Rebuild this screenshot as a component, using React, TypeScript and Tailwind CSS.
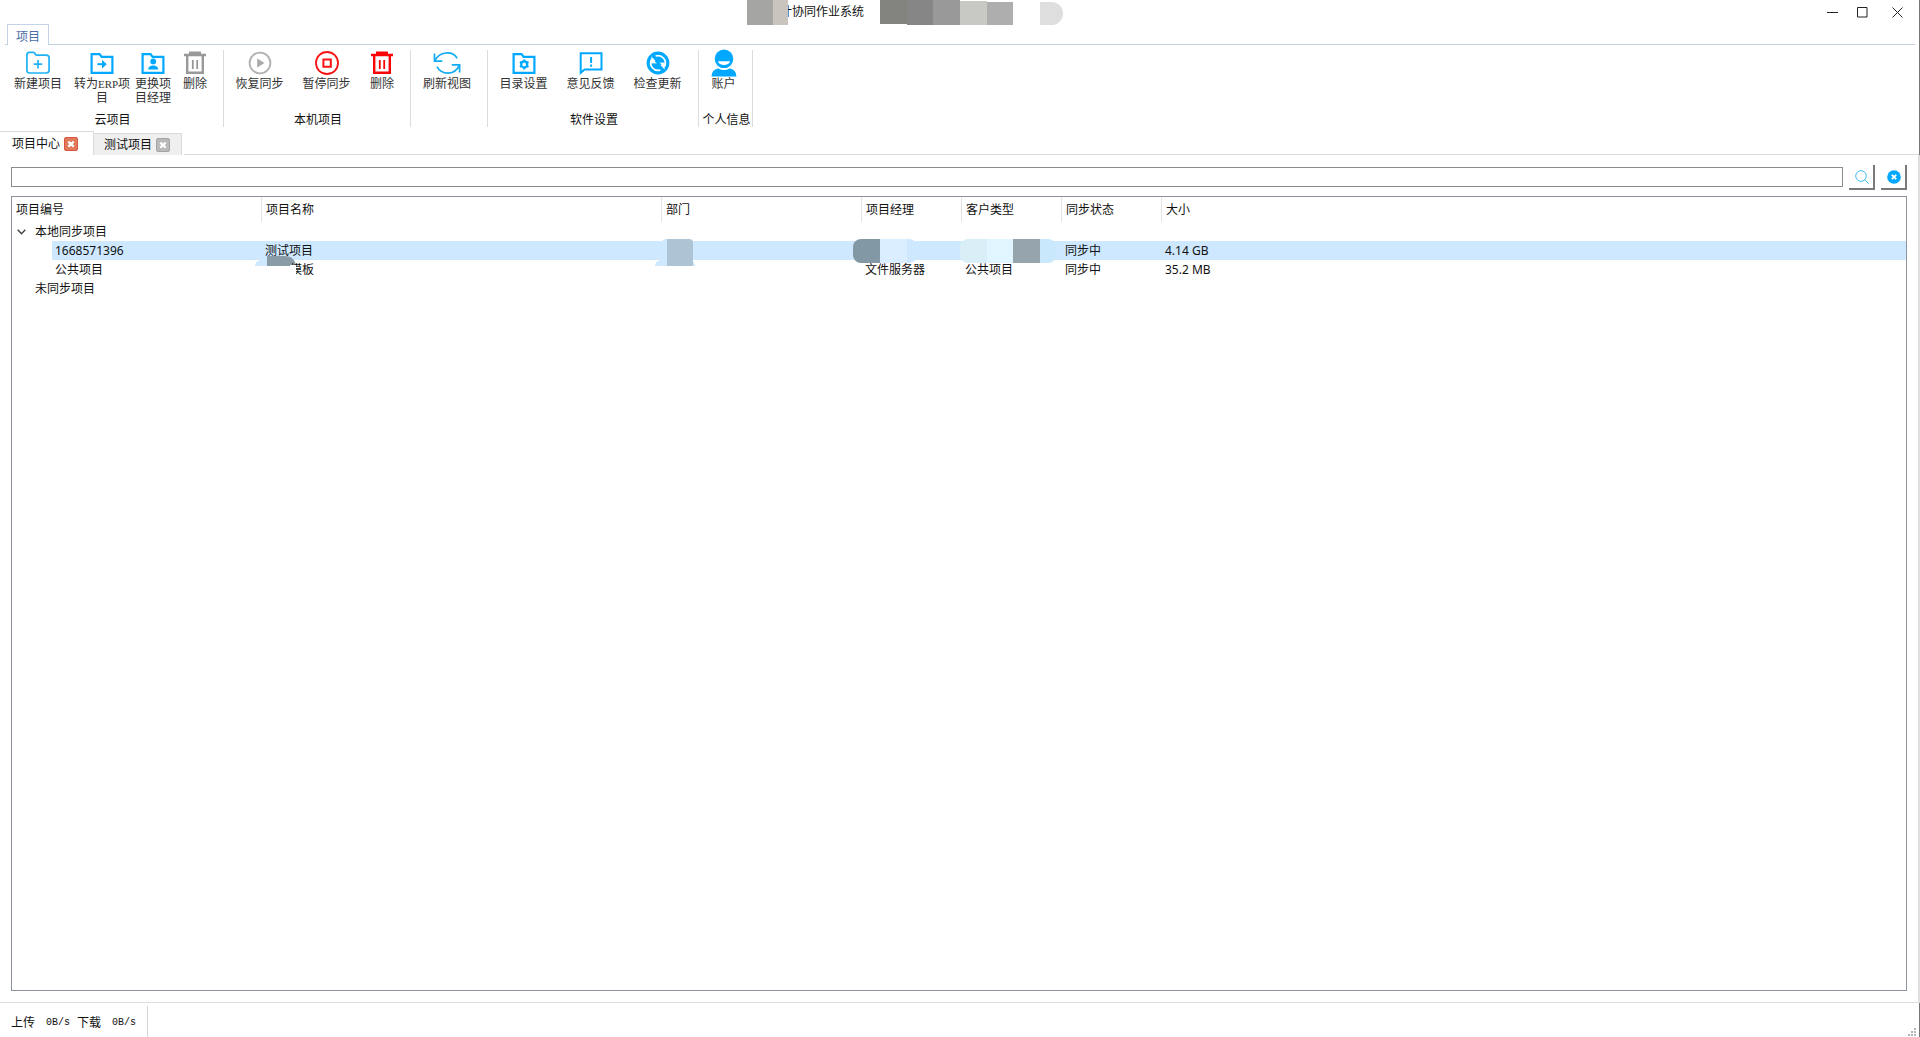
import React, { useState } from "react";

const BLUE = "#00a8ff";

function Svg({ children, size = "size-6" }: { children: React.ReactNode; size?: string }) {
  return (
    <svg viewBox="0 0 24 24" className={`${size} shrink-0`} fill="none" aria-hidden="true">
      {children}
    </svg>
  );
}

const FolderFrame = () => (
  <path d="M1.6 3.2h8l2 2.6h10.8v16H1.6z" stroke={BLUE} strokeWidth="2.2" />
);

const NewFolderIcon = () => (
  <Svg>
    <path
      d="M.9 4.2Q.9 1.4 3.4 1.4h4.2c1.6 0 1.4 2.8 3.2 2.8h9.4q2.9 0 2.9 2.8v12q0 3-2.9 3H3.8q-2.9 0-2.9-3z"
      stroke="#1eb2f5"
      strokeWidth="1.7"
    />
    <path d="M12 9v8.4M7.8 13.2h8.4" stroke="#1eb2f5" strokeWidth="1.7" />
  </Svg>
);

const FolderArrowIcon = () => (
  <Svg>
    <FolderFrame />
    <path d="M7.4 13.2h8" stroke={BLUE} strokeWidth="2" />
    <path d="M12 8.8l4.8 4.4-4.8 4.4z" fill={BLUE} />
  </Svg>
);

const FolderUserIcon = () => (
  <Svg>
    <FolderFrame />
    <circle cx="12.2" cy="10.4" r="2.9" fill={BLUE} />
    <path d="M7.2 18.6c0-5.4 10-5.4 10 0z" fill={BLUE} />
  </Svg>
);

const TrashIcon = ({ color }: { color: string }) => (
  <Svg>
    <path d="M1 4h22M6 1.7h12" stroke={color} strokeWidth="2.4" />
    <path d="M4.2 5v16.8h15.6V5" stroke={color} strokeWidth="2.4" />
    <path d="M9.8 9v9M14.2 9v9" stroke={color} strokeWidth="1.8" />
  </Svg>
);

const PlayIcon = () => (
  <Svg>
    <circle cx="12" cy="12" r="10.4" stroke="#b2b2b2" strokeWidth="1.9" />
    <path d="M9.2 7.6l7.2 4.4-7.2 4.4z" fill="#a9a9a9" />
  </Svg>
);

const StopIcon = () => (
  <Svg>
    <circle cx="12" cy="12" r="11" stroke="#f81414" strokeWidth="1.8" />
    <path d="M8.4 8.4h7.4v7.4H8.4z" stroke="#f81414" strokeWidth="2" />
  </Svg>
);

const RefreshIcon = () => (
  <svg viewBox="0 0 28 24" className="h-6 w-7 shrink-0" fill="none" stroke="#12acf5" strokeWidth="1.7" aria-hidden="true">
    <path d="M1.5 2.5v7.6h7.8M1.8 9.8C6.2.4 19.4-.8 24.2 7.4" />
    <path d="M26.6 21.6v-7.8h-7.8M26.4 14.2C21.8 24.6 9 24.6 4 15.6" />
  </svg>
);

const FolderGearIcon = () => (
  <Svg>
    <FolderFrame />
    <circle cx="12.2" cy="13.4" r="3" stroke={BLUE} strokeWidth="2.2" />
    <path
      d="M12.2 8.4v1.8M12.2 16.6v1.8M7.9 10.9l1.5.9M15 15l1.5.9M7.9 15.9l1.5-.9M15 11.8l1.5-.9"
      stroke={BLUE}
      strokeWidth="2"
    />
  </Svg>
);

const FeedbackIcon = () => (
  <Svg>
    <path d="M1.7 2.3h20.8v16.3H5.6L1.7 21.8z" stroke={BLUE} strokeWidth="2" />
    <path d="M12.1 6v6M12.1 13.6v2.2" stroke={BLUE} strokeWidth="2" />
  </Svg>
);

const UpdateIcon = () => (
  <Svg>
    <circle cx="12" cy="12" r="11.4" fill={BLUE} />
    <path d="M9.6 5a7.4 7.4 0 0 1 8.8 10.6M14.4 19A7.4 7.4 0 0 1 5.6 8.4" stroke="#fff" strokeWidth="1.7" />
    <path d="M5.4 5.6l6.4 6.6-6.6.4zM18.6 18.4l-6.4-6.6 6.6-.4z" fill="#fff" />
    <path d="M9.6 9.4l5 5" stroke={BLUE} strokeWidth="2.6" />
  </Svg>
);

const AccountIcon = () => (
  <svg viewBox="0 0 26 28" className="-my-0.5 h-7 w-[26px] shrink-0" aria-hidden="true">
    <circle cx="13" cy="9.8" r="9.3" fill={BLUE} />
    <path d="M7 12.2h12c-.8 5-11.2 5-12 0z" fill="#fff" />
    <path d="M.6 27.5C.8 22 4 20 7.6 19.6c3.2 2 7.6 2 10.8 0 3.6.4 6.8 2.4 7 7.9z" fill={BLUE} />
  </svg>
);

const CloseBox = ({ active }: { active: boolean }) => (
  <svg viewBox="0 0 14 14" className="size-3.5" aria-hidden="true">
    <rect x=".5" y=".5" width="13" height="13" rx="1.5" fill={active ? "#e07a5a" : "#b9b9b9"} stroke={active ? "#d9553f" : "#a6a6a6"} />
    <path d="M4.3 4.6l5.4 5M9.7 4.6l-5.4 5" stroke="#fff" strokeWidth="2.2" />
  </svg>
);

function Tool({ icon, width, children }: { icon: React.ReactNode; width: string; children: React.ReactNode }) {
  return (
    <button type="button" className={`flex flex-col items-center gap-0.5 text-center leading-[14px] text-[#333] ${width}`}>
      {icon}
      <span className="whitespace-nowrap">{children}</span>
    </button>
  );
}

function Group({ label, pad, children }: { label: string; pad: string; children: React.ReactNode }) {
  return (
    <section className="flex flex-col justify-between border-r border-[#dcdcdc]">
      <div className={`flex items-start ${pad}`}>{children}</div>
      <h2 className="h-3.5 pl-0.5 text-center leading-[14px]">{label}</h2>
    </section>
  );
}

function TitleBar() {
  return (
    <header className="grid h-6 shrink-0 grid-cols-[1fr_auto_1fr] pr-0.5">
      <span />
      <div className="flex h-[25px] pr-[107px]">
        <div className="relative z-10 flex">
          <span className="w-[26px] bg-[#a5a5a3]" />
          <span className="w-[15px] bg-[#c9c5be]" />
        </div>
        <h1 className="-ml-2 w-[100px] leading-6 whitespace-nowrap">计协同作业系统</h1>
        <div className="flex overflow-hidden">
          <span className="h-6 w-[27px] bg-[#838380]" />
          <span className="w-[26px] bg-[#868686]" />
          <span className="w-[27px] bg-[#999]" />
          <span className="mt-px w-[27px] bg-[#c8c9c4]" />
          <span className="mt-0.5 w-[26px] bg-[#aeaeae]" />
        </div>
        <span className="mt-0.5 ml-[27px] w-[23px] rounded-r-full bg-[#dedede]" />
      </div>
      <div className="flex justify-end text-[#222]">
        <button type="button" aria-label="最小化" className="flex w-[30px] items-center justify-center">
          <svg viewBox="0 0 11 11" className="size-[11px]"><path d="M0 5.5h11" stroke="currentColor" /></svg>
        </button>
        <button type="button" aria-label="最大化" className="flex w-[30px] items-center justify-center">
          <svg viewBox="0 0 11 11" className="size-[11px]"><path d="M.5.5h9.5v9.5H.5z" fill="none" stroke="currentColor" /></svg>
        </button>
        <button type="button" aria-label="关闭" className="flex w-10 items-center justify-center">
          <svg viewBox="0 0 11 11" className="size-[11px]"><path d="M.5.5l10 10M10.5.5l-10 10" stroke="currentColor" /></svg>
        </button>
      </div>
    </header>
  );
}

function Ribbon() {
  return (
    <>
      <nav className="mr-1 ml-[5px] flex h-[21px] shrink-0 border-b border-[#c3d4e7] pl-0.5">
        <button type="button" className="-mb-px h-[21px] w-[42px] border border-b-0 border-[#c3d4e7] bg-white leading-[23px] text-[#4a6ca8]">
          项目
        </button>
      </nav>
      <div className="flex h-[86px] shrink-0 pt-[5px] pb-1">
        <Group label="云项目" pad="pt-px pl-1.5 pr-[5px]">
          <Tool icon={<NewFolderIcon />} width="w-16">新建项目</Tool>
          <Tool icon={<FolderArrowIcon />} width="w-16">
            转为<span className="font-['Liberation_Serif'] text-[11px]">ERP</span>项<br />目
          </Tool>
          <Tool icon={<FolderUserIcon />} width="w-[38px]">更换项<br />目经理</Tool>
          <Tool icon={<TrashIcon color="#999" />} width="w-[46px]">删除</Tool>
        </Group>
        <Group label="本机项目" pad="pt-px pl-0.5 pr-1.5">
          <Tool icon={<PlayIcon />} width="w-[67px]">恢复同步</Tool>
          <Tool icon={<StopIcon />} width="w-[67px]">暂停同步</Tool>
          <Tool icon={<TrashIcon color="#fa0505" />} width="w-11">删除</Tool>
        </Group>
        <Group label="" pad="pt-px pr-1">
          <Tool icon={<RefreshIcon />} width="w-[72px]">刷新视图</Tool>
        </Group>
        <Group label="软件设置" pad="pt-px pl-0.5 pr-[7px]">
          <Tool icon={<FolderGearIcon />} width="w-[67px]">目录设置</Tool>
          <Tool icon={<FeedbackIcon />} width="w-[67px]">意见反馈</Tool>
          <Tool icon={<UpdateIcon />} width="w-[67px]">检查更新</Tool>
        </Group>
        <Group label="个人信息" pad="pt-px pr-1">
          <Tool icon={<AccountIcon />} width="w-[49px]">账户</Tool>
        </Group>
      </div>
    </>
  );
}

function DocumentTabs() {
  return (
    <div className="flex h-6 shrink-0 items-end">
      <div className="flex h-6 w-[94px] items-center border-t border-r border-[#dadada] bg-white pl-3">
        <button type="button" className="w-[52px] text-left">项目中心</button>
        <button type="button" aria-label="关闭项目中心"><CloseBox active /></button>
      </div>
      <div className="flex h-[22px] w-[88px] items-center border-t border-r border-[#dadada] bg-[#efefef] pl-2.5">
        <button type="button" className="w-[52px] text-left">测试项目</button>
        <button type="button" aria-label="关闭测试项目"><CloseBox active={false} /></button>
      </div>
      <span className="ml-0.5 flex-1 border-b border-[#dadada]" />
    </div>
  );
}

function SearchRow() {
  const [query, setQuery] = useState("");
  const button =
    "flex h-[25px] w-[26px] items-center justify-center border-r-2 border-b-2 border-[#7a7a7a] bg-white pl-px";
  return (
    <form className="flex items-start" onSubmit={(e) => e.preventDefault()}>
      <input
        aria-label="搜索项目"
        value={query}
        onChange={(e) => setQuery(e.target.value)}
        className="mt-0.5 mr-1.5 h-5 min-w-0 flex-1 border border-[#8a8a8a] bg-white px-1 outline-none"
      />
      <button type="submit" aria-label="搜索" className={button}>
        <svg viewBox="0 0 14 14" className="size-3.5" fill="none" stroke="#3dbdf7" aria-hidden="true">
          <circle cx="6" cy="6" r="5.3" />
          <path d="M9.8 9.8l3.8 3.8" />
        </svg>
      </button>
      <button type="button" aria-label="清除" onClick={() => setQuery("")} className={`ml-1.5 ${button}`}>
        <svg viewBox="0 0 14 14" className="size-3.5" aria-hidden="true">
          <circle cx="7" cy="7" r="6.8" fill={BLUE} />
          <path d="M4.8 4.8l4.4 4.4M9.2 4.8L4.8 9.2" stroke="#fff" strokeWidth="1.8" />
        </svg>
      </button>
    </form>
  );
}

const columns = [
  { name: "项目编号", width: "w-[250px]" },
  { name: "项目名称", width: "w-[400px]" },
  { name: "部门", width: "w-[200px]" },
  { name: "项目经理", width: "w-[100px]" },
  { name: "客户类型", width: "w-[100px]" },
  { name: "同步状态", width: "w-[100px]" },
  { name: "大小", width: "" },
];

function ProjectTable() {
  return (
    <div className="min-h-0 flex-1 overflow-hidden border border-[#8c939c] bg-white">
      <table className="w-full table-fixed border-collapse whitespace-nowrap">
        <colgroup>
          {columns.map((c) => (
            <col key={c.name} className={c.width} />
          ))}
        </colgroup>
        <thead>
          <tr className="h-[25px]">
            {columns.map((c, i) => (
              <th key={c.name} scope="col" className="p-0 text-left font-normal">
                <span
                  className={`block pl-1 leading-[25px] ${i < columns.length - 1 ? "border-r border-[#e3e3e3]" : ""}`}
                >
                  {c.name}
                </span>
              </th>
            ))}
          </tr>
        </thead>
        <tbody className="leading-[19px]">
          <tr className="h-[19px]">
            <td colSpan={7} className="p-0">
              <button type="button" aria-expanded="true" className="flex h-[19px] items-center pl-[5px]">
                <svg viewBox="0 0 9 6" className="mr-[9px] h-1.5 w-[9px]" fill="none" aria-hidden="true">
                  <path d="M.7.7l3.8 4L8.3.7" stroke="#444" strokeWidth="1.5" />
                </svg>
                本地同步项目
              </button>
            </td>
          </tr>
          <tr className="h-[19px]" aria-selected="true">
            <td className="p-0 pl-10"><span className="block bg-[#cde8ff] pl-[3px]">1668571396</span></td>
            <td className="relative bg-[#cde8ff] p-0 pl-[3px]">
              测试项目
              <span className="absolute top-[19px] -left-[7px] h-1.5 w-3 rounded-tl-full bg-[#cde8ff]" />
              <span className="absolute top-[15px] left-[5px] h-2.5 w-[29px] rounded-tr-full bg-[#8a9ba8]" />
            </td>
            <td className="relative bg-[#cde8ff] p-0">
              <span className="absolute -top-0.5 left-0 h-1 w-6 rounded-tl-md bg-[#cde8ff]" />
              <span className="absolute top-[19px] -left-[7px] h-1.5 w-10 rounded-t-md bg-[#cde8ff]" />
              <span className="absolute -top-0.5 left-[5px] h-[27px] w-[26px] rounded-tr bg-[#aec3d3]" />
            </td>
            <td className="relative bg-[#cde8ff] p-0">
              <span className="absolute -top-0.5 -left-[9px] flex h-6 w-16 overflow-hidden rounded-lg">
                <span className="w-[27px] bg-[#8299a5]" />
                <span className="w-[27px] bg-[#daeeff]" />
                <span className="flex-1 bg-[#cde8ff]" />
              </span>
            </td>
            <td className="relative bg-[#cde8ff] p-0">
              <span className="absolute -top-0.5 -left-0.5 flex h-6 w-24 overflow-hidden rounded-lg">
                <span className="w-[27px] bg-[#d9eef7]" />
                <span className="w-[26px] bg-[#e0f5ff]" />
                <span className="w-[27px] bg-[#96a5ad]" />
                <span className="flex-1 bg-[#c9e8fb]" />
              </span>
            </td>
            <td className="bg-[#cde8ff] p-0 pl-[3px]">同步中</td>
            <td className="bg-[#cde8ff] p-0 pl-[3px]">4.14 GB</td>
          </tr>
          <tr className="h-[19px]">
            <td className="p-0 pl-[43px]">公共项目</td>
            <td className="p-0 pl-7">
              <span className="relative">
                模板
                <span className="absolute top-1 left-0 h-3.5 w-1.5 bg-white" />
              </span>
            </td>
            <td className="p-0" />
            <td className="p-0 pl-[3px]">文件服务器</td>
            <td className="p-0 pl-[3px]">公共项目</td>
            <td className="p-0 pl-[3px]">同步中</td>
            <td className="p-0 pl-[3px]">35.2 MB</td>
          </tr>
          <tr className="h-[19px]">
            <td colSpan={7} className="p-0 pl-[23px]">未同步项目</td>
          </tr>
        </tbody>
      </table>
    </div>
  );
}

function StatusBar() {
  return (
    <footer className="flex h-[34px] shrink-0 items-stretch justify-between border-r border-[#777] pt-[3px]">
      <div className="flex w-[148px] items-center border-r border-[#d5d5d5] pt-0.5 pl-[11px]">
        <span className="w-[35px]">上传</span>
        <span className="w-[31px] font-['Liberation_Mono'] text-[10px]">0B/s</span>
        <span className="w-[35px]">下载</span>
        <span className="font-['Liberation_Mono'] text-[10px]">0B/s</span>
      </div>
      <svg viewBox="0 0 9 9" className="mr-0.5 size-[9px] self-end" fill="#b5b5b5" aria-hidden="true">
        <path d="M6 0h2v2H6zM3 3h2v2H3zM6 3h2v2H6zM0 6h2v2H0zM3 6h2v2H3zM6 6h2v2H6z" />
      </svg>
    </footer>
  );
}

export default function App() {
  return (
    <div className="flex h-screen flex-col overflow-hidden bg-white font-['Noto_Sans','Noto_Sans_CJK_SC',sans-serif] text-[12px] text-[#111]">
      <div className="flex shrink-0 flex-col border-r border-[#777]">
        <TitleBar />
        <Ribbon />
        <DocumentTabs />
      </div>
      <main className="flex min-h-0 flex-1 flex-col gap-1.5 border-r-2 border-b border-[#dedede] pt-2.5 pr-[11px] pb-[11px] pl-[11px]">
        <SearchRow />
        <ProjectTable />
      </main>
      <StatusBar />
    </div>
  );
}
